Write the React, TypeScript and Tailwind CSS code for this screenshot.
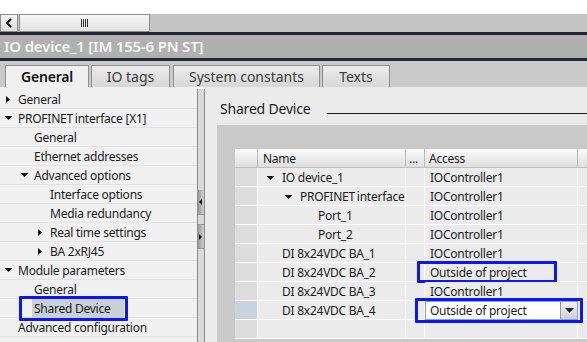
import React from "react";

const Tri = ({ dir }: { dir: "right" | "down" }) =>
  dir === "right" ? (
    <svg width="8" height="9" viewBox="0 0 8 9" className="shrink-0">
      <path d="M2 1 L6 4.5 L2 8 Z" fill="#111" />
    </svg>
  ) : (
    <svg width="9" height="8" viewBox="0 0 9 8" className="shrink-0">
      <path d="M0.5 2 L8.5 2 L4.5 6 Z" fill="#111" />
    </svg>
  );

const Label = ({ text }: { text: string }) =>
  text.startsWith("PROFINET ") ? (
    <>
      PROFINET<span className="ml-[2px]">{text.slice(9)}</span>
    </>
  ) : (
    <>{text}</>
  );

type TreeItem = { label: string; indent: number; tri?: "right" | "down"; selected?: boolean };

const tree: TreeItem[] = [
  { label: "General", indent: 0, tri: "right" },
  { label: "PROFINET interface [X1]", indent: 0, tri: "down" },
  { label: "General", indent: 1 },
  { label: "Ethernet addresses", indent: 1 },
  { label: "Advanced options", indent: 1, tri: "down" },
  { label: "Interface options", indent: 2 },
  { label: "Media redundancy", indent: 2 },
  { label: "Real time settings", indent: 2, tri: "right" },
  { label: "BA 2xRJ45", indent: 2, tri: "right" },
  { label: "Module parameters", indent: 0, tri: "down" },
  { label: "General", indent: 1 },
  { label: "Shared Device", indent: 1, selected: true },
  { label: "Advanced configuration", indent: 0 },
];

type Row = { name: string; indent: number; tri?: boolean; access: string; box?: boolean; combo?: boolean };

const rows: Row[] = [
  { name: "IO device_1", indent: 0, tri: true, access: "IOController1" },
  { name: "PROFINET interface", indent: 1, tri: true, access: "IOController1" },
  { name: "Port_1", indent: 2, access: "IOController1" },
  { name: "Port_2", indent: 2, access: "IOController1" },
  { name: "DI 8x24VDC BA_1", indent: 0, access: "IOController1" },
  { name: "DI 8x24VDC BA_2", indent: 0, access: "Outside of project", box: true },
  { name: "DI 8x24VDC BA_3", indent: 0, access: "IOController1" },
  { name: "DI 8x24VDC BA_4", indent: 0, access: "Outside of project", combo: true },
];

export default function App() {
  const font = { fontFamily: '"Noto Sans", "Open Sans", sans-serif' };
  return (
    <div className="w-[587px] h-[342px] overflow-hidden bg-white flex flex-col text-[#1b1b1b]" style={font}>
      {/* top white */}
      <div className="h-[14px] bg-white shrink-0" />
      {/* horizontal scrollbar */}
      <div className="h-[18px] bg-[#c5c5c5] flex items-stretch shrink-0">
        <div className="w-[18px] border border-[#8c8c8c] bg-gradient-to-b from-[#f4f4f4] to-[#dcdcdc] flex items-center justify-center">
          <svg width="8" height="10" viewBox="0 0 8 10">
            <path d="M6 1 L2 5 L6 9" stroke="#111" strokeWidth="2" fill="none" />
          </svg>
        </div>
        <div className="ml-[1px] w-[131px] border border-[#8c8c8c] bg-gradient-to-b from-[#f6f6f6] to-[#e2e2e2] flex items-center justify-center">
          <svg width="7" height="8" viewBox="0 0 7 8">
            <path d="M0.5 0 V8 M2.5 0 V8 M4.5 0 V8 M6.5 0 V8" stroke="#333" strokeWidth="1" />
          </svg>
        </div>
      </div>
      <div className="h-[3px] bg-[#232838] shrink-0" />
      {/* title */}
      <div className="h-[23px] bg-[#b0b0b0] flex items-center pl-[4px] text-[15px] font-semibold text-[#f7f7f7] leading-none shrink-0 tracking-[-0.2px]">
        IO device_1 [IM 155-6 PN ST]
      </div>
      <div className="h-[3px] bg-[#232838] shrink-0" />
      {/* tabs */}
      <div className="h-[26px] bg-[#c9c9c9] flex items-end pl-[5px] shrink-0 text-[14px] leading-none">
        <div className="w-[84px] h-[22px] bg-[#f0f0f0] border border-b-0 border-[#8e8e8e] flex items-center justify-center font-semibold text-[#111] tracking-[-0.2px]">
          General
        </div>
        <div className="ml-[2px] w-[79px] h-[22px] bg-gradient-to-b from-[#ececec] to-[#d6d6d6] border border-b-0 border-[#8e8e8e] flex items-center justify-center text-[#3c3c3c]">
          IO tags
        </div>
        <div className="ml-[3px] w-[147px] h-[22px] bg-gradient-to-b from-[#ececec] to-[#d6d6d6] border border-b-0 border-[#8e8e8e] flex items-center justify-center text-[#3c3c3c]">
          System constants
        </div>
        <div className="ml-[2px] w-[68px] h-[22px] bg-gradient-to-b from-[#ececec] to-[#d6d6d6] border border-b-0 border-[#8e8e8e] flex items-center justify-center text-[#3c3c3c]">
          Texts
        </div>
      </div>
      {/* content */}
      <div className="flex-1 flex min-h-0">
        {/* left tree */}
        <div className="w-[197px] bg-[#f0f0f0] pt-[3px] text-[12px] leading-none shrink-0 tracking-[-0.25px]">
          {tree.map((t, i) => (
            <div key={i} className="relative h-[19px] border-b border-[#e2e2e2] flex items-center whitespace-nowrap">
              <div
                className={
                  t.indent === 0
                    ? "w-[18px] pl-[4px] flex shrink-0"
                    : t.indent === 1
                    ? "w-[34px] pl-[20px] flex shrink-0"
                    : "w-[50px] pl-[36px] flex shrink-0"
                }
              >
                {t.tri && <Tri dir={t.tri} />}
              </div>
              <span
                className={
                  t.selected
                    ? "bg-[#c9d0da] h-[19px] flex items-center pr-[14px] -ml-[2px] pl-[2px] pt-[1px]"
                    : "pt-[1px]"
                }
              >
                <Label text={t.label} />
              </span>
              {t.selected && (
                <div className="absolute left-[19px] top-[-3px] w-[109px] h-[25px] border-[3px] border-[#0b17f2] rounded-[1px]" />
              )}
            </div>
          ))}
        </div>
        {/* splitter / scrollbar */}
        <div className="w-[8px] bg-[#d9d9d9] border-x border-[#8c8c8c] mt-[2px] flex flex-col shrink-0">
          <div className="h-[101px]" />
          <div className="h-[24px] bg-gradient-to-r from-[#9a9a9a] to-[#cfcfcf] flex items-center">
            <svg width="6" height="8" viewBox="0 0 6 8">
              <path d="M4 1 L1 4 L4 7 Z" fill="#111" />
            </svg>
          </div>
          <div className="h-[10px] border-t border-[#9a9a9a]" />
          <div className="h-[24px] bg-gradient-to-r from-[#9a9a9a] to-[#cfcfcf] border-t border-[#9a9a9a] flex items-center">
            <svg width="6" height="8" viewBox="0 0 6 8">
              <path d="M1 1 L4 4 L1 7 Z" fill="#111" />
            </svg>
          </div>
          <div className="flex-1 border-t border-[#9a9a9a]" />
        </div>
        {/* right panel */}
        <div className="flex-1 bg-[#ebebeb] pl-[12px] flex flex-col min-w-0">
          <div className="h-[38px] flex items-end pb-[9px] pl-[3px]">
            <span className="text-[14px] leading-none text-[#1b1b1b] tracking-[-0.2px]">Shared Device</span>
            <div className="flex-1 ml-[17px] mb-[2px] h-[1px] bg-[#1b1b1b]" />
          </div>
          <div className="flex-1 bg-[#c9c9c9] pt-[24px] pl-[18px] text-[12px] leading-none whitespace-nowrap tracking-[-0.25px]">
            <div className="grid grid-cols-[23px_148px_19px_153px_1fr] h-[19px] bg-gradient-to-b from-[#fbfbfb] to-[#dedede] border-b border-[#c0c0c0]">
              <div className="border-r border-[#b9b9b9]" />
              <div className="border-r border-[#b9b9b9] flex items-center pl-[5px] pt-[1px]">Name</div>
              <div className="border-r border-[#b9b9b9] flex items-center pl-[3px] pt-[1px]">...</div>
              <div className="border-r border-[#b9b9b9] flex items-center pl-[4px] pt-[1px]">Access</div>
              <div />
            </div>
            {rows.map((r, i) => (
              <div key={i} className="grid grid-cols-[23px_148px_19px_153px_1fr] h-[19px] border-b border-white">
                <div className={r.combo ? "bg-[#c9d3df] border-r border-white" : "bg-[#dcdcdc] border-r border-white"} />
                <div className="bg-[#ebebeb] border-r border-white flex items-center pt-[2px] overflow-hidden">
                  <div
                    className={
                      r.indent === 0
                        ? "w-[24px] pl-[8px] flex shrink-0"
                        : r.indent === 1
                        ? "w-[42px] pl-[26px] flex shrink-0"
                        : "w-[60px] flex shrink-0"
                    }
                  >
                    {r.tri && <Tri dir="down" />}
                  </div>
                  <span>
                    <Label text={r.name} />
                  </span>
                </div>
                <div className="bg-[#ebebeb] border-r border-white" />
                <div className="relative bg-[#ebebeb] border-r border-white flex items-center">
                  {r.combo ? (
                    <div className="absolute left-0 top-0 w-[153px] h-[19px] bg-white border border-[#8aa0c8] flex items-center pl-[4px]">
                      <span className="flex-1 pt-[1px]">{r.access}</span>
                      <div className="w-[17px] h-[17px] bg-gradient-to-b from-[#f2f2f2] to-[#cfcfcf] border-l border-[#9a9a9a] flex items-center justify-center">
                        <svg width="9" height="5" viewBox="0 0 9 5">
                          <path d="M0 0 H9 L4.5 5 Z" fill="#1c2452" />
                        </svg>
                      </div>
                    </div>
                  ) : (
                    <span className="pl-[5px] pt-[2px]">{r.access}</span>
                  )}
                  {r.box && (
                    <div className="absolute left-[-8px] top-[-2px] w-[140px] h-[22px] border-[3px] border-[#0b17f2] rounded-[1px]" />
                  )}
                  {r.combo && (
                    <div className="absolute left-[-10px] top-[-3px] w-[168px] h-[25px] border-[3px] border-[#0b17f2] rounded-[1px]" />
                  )}
                </div>
                <div className="bg-[#ebebeb]" />
              </div>
            ))}
            <div className="grid grid-cols-[23px_148px_19px_153px_1fr] h-[19px] border-b border-white">
              <div className="bg-[#dcdcdc] border-r border-white" />
              <div className="bg-[#ebebeb] border-r border-white" />
              <div className="bg-[#ebebeb] border-r border-white" />
              <div className="bg-[#ebebeb] border-r border-white" />
              <div className="bg-[#ebebeb]" />
            </div>
          </div>
        </div>
      </div>
    </div>
  );
}
